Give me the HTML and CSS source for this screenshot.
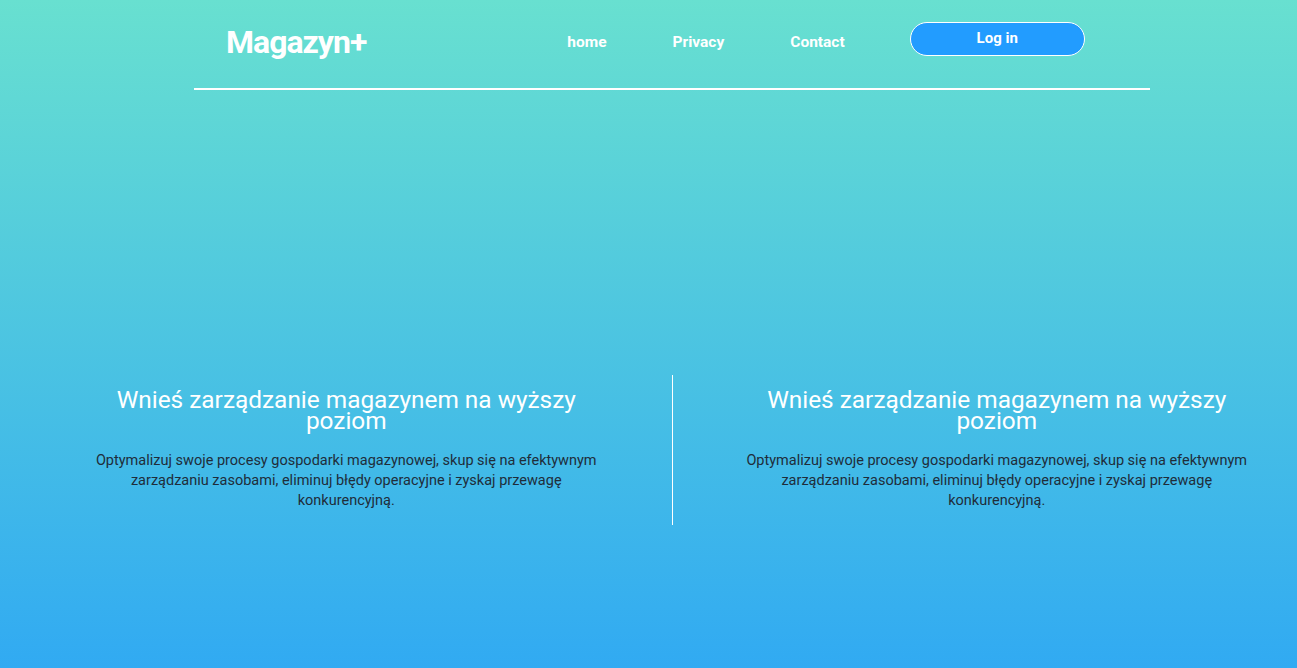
FILE: index.html
```html
<!DOCTYPE html>
<html lang="pl">
<head>
<meta charset="utf-8">
<title>Magazyn+</title>
<link rel="stylesheet" href="styles.css">
</head>
<body>
<div class="page">
  <header class="header">
    <div class="logo">Magazyn+</div>
    <nav class="nav">
      <a href="#" class="nav-link">home</a>
      <a href="#" class="nav-link">Privacy</a>
      <a href="#" class="nav-link">Contact</a>
    </nav>
    <button class="login">Log in</button>
  </header>
  <main class="features">
    <section class="feature">
      <h2 class="feature-title">Wnieś zarządzanie magazynem na wyższy poziom</h2>
      <p class="feature-text">Optymalizuj swoje procesy gospodarki magazynowej, skup się na efektywnym zarządzaniu zasobami, eliminuj błędy operacyjne i zyskaj przewagę konkurencyjną.</p>
    </section>
    <div class="divider"></div>
    <section class="feature">
      <h2 class="feature-title">Wnieś zarządzanie magazynem na wyższy poziom</h2>
      <p class="feature-text">Optymalizuj swoje procesy gospodarki magazynowej, skup się na efektywnym zarządzaniu zasobami, eliminuj błędy operacyjne i zyskaj przewagę konkurencyjną.</p>
    </section>
  </main>
</div>
</body>
</html>
```
FILE: styles.css
```css
* { box-sizing: border-box; }
html, body { margin: 0; padding: 0; }
body {
  font-family: Roboto, "Liberation Sans", sans-serif;
  background: linear-gradient(to bottom, #68e0d0 0%, #31aaf2 100%);
  min-height: 668px;
  color: #fff;
}
.page { height: 668px; overflow: hidden; }
.header {
  width: 956px;
  margin-left: 194px;
  height: 90px;
  border-bottom: 2px solid #fff;
  display: flex;
  align-items: flex-start;
}
.logo {
  margin-left: 32px;
  margin-top: 24px;
  font-size: 32px;
  font-weight: 700;
  line-height: 36px;
  letter-spacing: -1px;
}
.nav {
  display: flex;
  margin-left: 201px;
  margin-top: 33px;
  gap: 66px;
}
.nav-link {
  color: #fff;
  text-decoration: none;
  font-weight: 700;
  font-size: 15.5px;
  line-height: 18px;
  letter-spacing: 0;
}
.login {
  margin-left: 65px;
  margin-top: 22px;
  width: 175px;
  height: 34px;
  border: 1px solid #fff;
  border-radius: 17px;
  background: #229cff;
  color: #fff;
  font-family: inherit;
  font-weight: 700;
  font-size: 15px;
  letter-spacing: 0;
  padding: 0 0 2px;
  line-height: 18px;
}
.features {
  display: grid;
  grid-template-columns: 1fr 2px 1fr;
  column-gap: 24px;
  padding-left: 46px;
  margin-top: 285px;
}
.divider { border-right: 1px solid #fff; height: 150px; }
.feature {
  display: flex;
  flex-direction: column;
  align-items: center;
  text-align: center;
  padding-top: 14px;
}
.feature-title {
  margin: 0;
  max-width: 520px;
  font-size: 24.4px;
  font-weight: 400;
  line-height: 21px;
}
.feature-text {
  margin: 20px 0 0;
  max-width: 512px;
  font-size: 14.5px;
  line-height: 20px;
  color: #1f2d3a;
}
```
